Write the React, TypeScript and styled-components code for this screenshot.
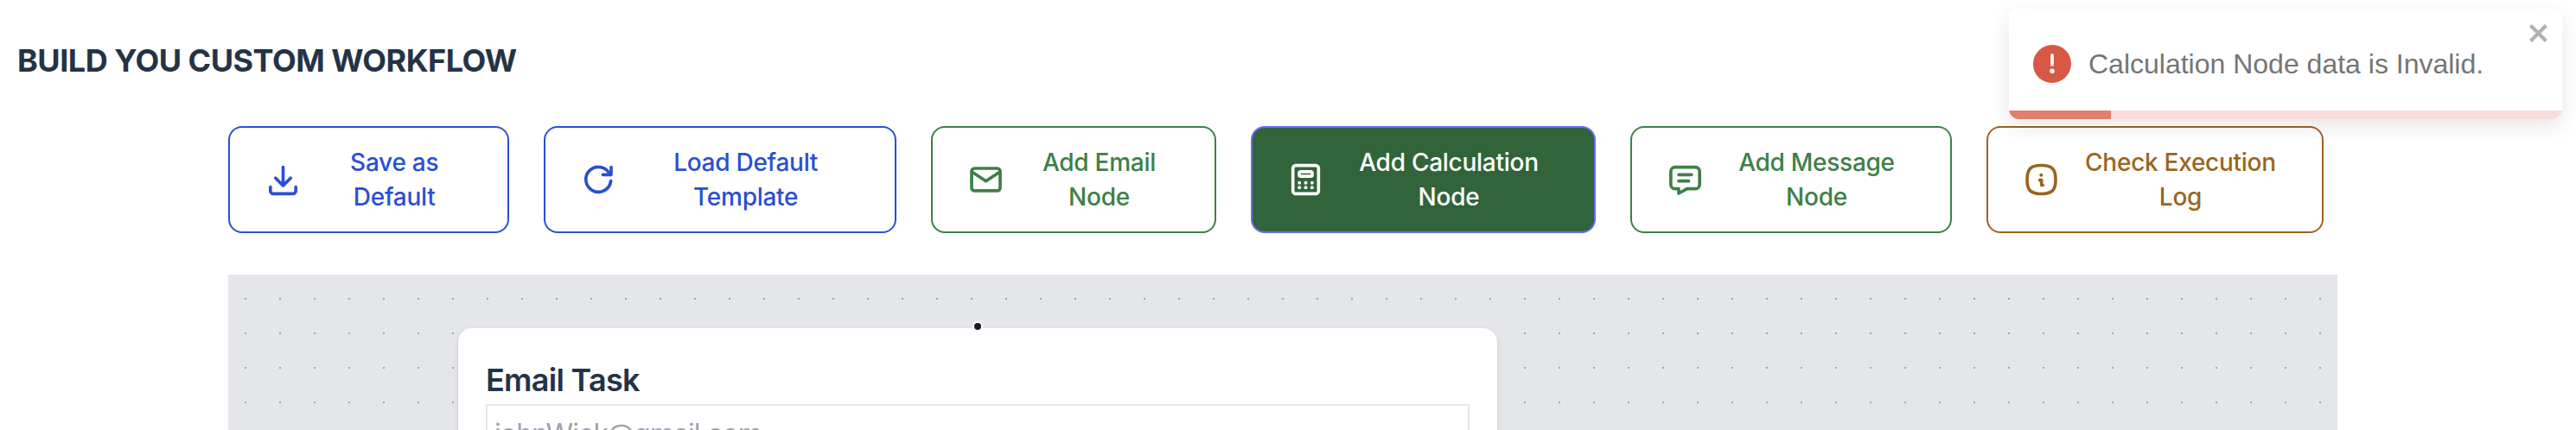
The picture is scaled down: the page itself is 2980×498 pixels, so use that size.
import React from "react";
import styled, { createGlobalStyle } from "styled-components";

const GlobalStyle = createGlobalStyle`
  *, *::before, *::after { box-sizing: border-box; }
  body { margin: 0; background: #fff; font-family: Inter, "Liberation Sans", sans-serif; }
  #root { height: 498px; overflow: hidden; }
`;

const Page = styled.div`
  height: 498px;
  overflow: hidden;
  display: flex;
  flex-direction: column;
`;

const PageTitle = styled.h1`
  margin: 0;
  padding: 42px 20px 48px;
  font-size: 36px;
  line-height: 56px;
  font-weight: 700;
  letter-spacing: -0.5px;
  color: #243346;
`;

const Toolbar = styled.div`
  display: flex;
  gap: 40px;
  margin: 0 264px 48px;
`;

const tones = {
  blue: { color: "#2a4fd3", border: "#2a4fd3", background: "transparent" },
  green: { color: "#3d8046", border: "#3d8046", background: "transparent" },
  solid: { color: "#ffffff", border: "#666ff8", background: "#31643a" },
  amber: { color: "#9a6521", border: "#9a6521", background: "transparent" },
};

const ToolButton = styled.button<{ $tone: keyof typeof tones; $width: number }>`
  display: flex;
  align-items: center;
  gap: 16px;
  flex: none;
  width: ${(p) => p.$width}px;
  height: 124px;
  padding: 20px 40px;
  border: 2px solid ${(p) => tones[p.$tone].border};
  border-radius: 16px;
  background: ${(p) => tones[p.$tone].background};
  color: ${(p) => tones[p.$tone].color};
  font-family: inherit;
  font-size: 28px;
  line-height: 40px;
  font-weight: 500;
  letter-spacing: -0.27px;
`;

const ToolIcon = styled.svg`
  flex: none;
  width: 43px;
  height: 40px;
  fill: none;
  stroke: currentColor;
  stroke-width: 2.2;
  stroke-linecap: round;
  stroke-linejoin: round;
`;

const ToolLabel = styled.span`
  flex: 1;
  text-align: center;
  white-space: nowrap;
`;

const Canvas = styled.main`
  flex: 1;
  margin: 0 276px 0 264px;
  padding: 62px 0 0 266px;
  background-color: #e5e6ea;
  background-image: conic-gradient(from 0deg at 2px 2px, transparent 270deg, #a1a3a8 270deg);
  background-size: 40px 40px;
  background-position: 19px 27px;
`;

const NodeCard = styled.section`
  position: relative;
  width: 1202px;
  height: 260px;
  padding: 32px;
  border-radius: 16px;
  background: #fff;
  box-shadow: 0 2px 6px rgba(0, 0, 0, 0.1), 0 2px 4px -2px rgba(0, 0, 0, 0.1);
`;

const Handle = styled.span`
  position: absolute;
  top: -8px;
  left: 50%;
  width: 12px;
  height: 12px;
  transform: translateX(-50%);
  border: 2px solid #fff;
  border-radius: 50%;
  background: #1a192b;
`;

const NodeTitle = styled.h2`
  margin: 0;
  font-size: 36px;
  line-height: 56px;
  font-weight: 600;
  letter-spacing: -0.7px;
  color: #243346;
`;

const EmailInput = styled.input`
  display: block;
  width: 100%;
  height: 68px;
  padding: 8px;
  border: 2px solid #e5e6ea;
  outline: none;
  font-family: inherit;
  font-size: 32px;
  line-height: 48px;
  letter-spacing: -0.9px;
  &::placeholder { color: #9ea3ae; opacity: 1; }
`;

const Toast = styled.div`
  position: absolute;
  top: 10px;
  right: 16px;
  width: 640px;
  height: 128px;
  display: flex;
  align-items: center;
  gap: 20px;
  padding: 0 28px;
  border-radius: 12px;
  overflow: hidden;
  background: #fff;
  color: #757575;
  font-family: "Liberation Sans", Arial, sans-serif;
  font-size: 32px;
  box-shadow: 0 8px 24px rgba(0, 0, 0, 0.1);
`;

const ToastIcon = styled.svg`
  flex: none;
  width: 44px;
  height: 44px;
  fill: #d75845;
`;

const CloseButton = styled.button`
  position: absolute;
  top: 12px;
  right: 12px;
  padding: 0;
  border: 0;
  background: none;
  color: #000;
  opacity: 0.3;
  svg { display: block; width: 28px; height: 32px; fill: currentColor; }
`;

const ProgressTrack = styled.div`
  position: absolute;
  left: 0;
  right: 0;
  bottom: 0;
  height: 10px;
  background: #f7dcd9;
`;

const Progress = styled.div`
  width: 118px;
  height: 100%;
  background: #e17f70;
`;

type Action = {
  tone: keyof typeof tones;
  width: number;
  lines: [string, string];
  icon: React.ReactNode;
};

const actions: Action[] = [
  {
    tone: "blue",
    width: 325.3,
    lines: ["Save as", "Default"],
    icon: (
      <>
        <path d="M12 3.4v12.8M6.8 10.9l5.2 5.3 5.2-5.3" />
        <path d="M3.2 17.2v2.6a2 2 0 0 0 2 2h13.6a2 2 0 0 0 2-2v-2.6" />
      </>
    ),
  },
  {
    tone: "blue",
    width: 407.7,
    lines: ["Load Default", "Template"],
    icon: (
      <>
        <path d="M20.5 12.9A8.7 8.7 0 1 1 19.9 8.6" />
        <path d="M20.7 3.4v5.2h-5.8" />
      </>
    ),
  },
  {
    tone: "green",
    width: 330,
    lines: ["Add Email", "Node"],
    icon: (
      <>
        <rect x="2.1" y="4.2" width="19.8" height="15.5" rx="2" />
        <path d="M2.5 6.8 12 13l9.5-6.2" />
      </>
    ),
  },
  {
    tone: "solid",
    width: 399,
    lines: ["Add Calculation", "Node"],
    icon: (
      <>
        <rect x="3.1" y="2.2" width="17.8" height="19.6" rx="2" />
        <rect x="7.5" y="6.5" width="9" height="3.2" rx="1" />
        <g fill="currentColor" stroke="none">
          {[14.3, 17.5].map((y) =>
            [7.6, 12, 16.4].map((x) => <circle key={`${x}-${y}`} cx={x} cy={y} r="1.2" />)
          )}
        </g>
      </>
    ),
  },
  {
    tone: "green",
    width: 372,
    lines: ["Add Message", "Node"],
    icon: (
      <>
        <path d="M5 3.4h14a3 3 0 0 1 3 3v9a3 3 0 0 1-3 3h-5.8l-5.7 3.2v-3.2H5a3 3 0 0 1-3-3v-9a3 3 0 0 1 3-3z" />
        <path d="M7.5 8.6h8.9M7.5 13h6.9" />
      </>
    ),
  },
  {
    tone: "amber",
    width: 390,
    lines: ["Check Execution", "Log"],
    icon: (
      <>
        <path d="M12 2.1c7.4 0 9.9 2.5 9.9 9.9s-2.5 9.9-9.9 9.9S2.1 19.4 2.1 12 4.6 2.1 12 2.1z" />
        <path d="M10.9 12.4h1.2v3.5h.9" />
        <circle cx="11.9" cy="8.8" r="1.2" fill="currentColor" stroke="none" />
      </>
    ),
  },
];

export default function App() {
  return (
    <>
      <GlobalStyle />
      <Page>
        <PageTitle>BUILD YOU CUSTOM WORKFLOW</PageTitle>
        <Toolbar>
          {actions.map(({ tone, width, lines, icon }) => (
            <ToolButton key={lines.join(" ")} $tone={tone} $width={width}>
              <ToolIcon viewBox="0 0 24 24">{icon}</ToolIcon>
              <ToolLabel>
                {lines[0]}
                <br />
                {lines[1]}
              </ToolLabel>
            </ToolButton>
          ))}
        </Toolbar>
        <Canvas>
          <NodeCard>
            <Handle />
            <NodeTitle>Email Task</NodeTitle>
            <EmailInput placeholder="johnWick@gmail.com" />
          </NodeCard>
        </Canvas>
        <Toast role="alert">
          <ToastIcon viewBox="0 0 24 24">
            <path d="M11.983 0a12.206 12.206 0 00-8.51 3.653A11.8 11.8 0 000 12.207 11.779 11.779 0 0011.8 24h.214A12.111 12.111 0 0024 11.791 11.766 11.766 0 0011.983 0zM10.5 16.542a1.476 1.476 0 011.449-1.53h.027a1.527 1.527 0 011.523 1.47 1.475 1.475 0 01-1.449 1.53h-.027a1.529 1.529 0 01-1.523-1.47zM11 12.5v-6a1 1 0 012 0v6a1 1 0 11-2 0z" />
          </ToastIcon>
          <span>Calculation Node data is Invalid.</span>
          <CloseButton aria-label="close">
            <svg viewBox="0 0 14 16">
              <path d="M7.71 8.23l3.75 3.75-1.48 1.48-3.75-3.75-3.75 3.75L1 11.98l3.75-3.75L1 4.48 2.48 3l3.75 3.75L9.98 3l1.48 1.48-3.75 3.75z" />
            </svg>
          </CloseButton>
          <ProgressTrack>
            <Progress />
          </ProgressTrack>
        </Toast>
      </Page>
    </>
  );
}
